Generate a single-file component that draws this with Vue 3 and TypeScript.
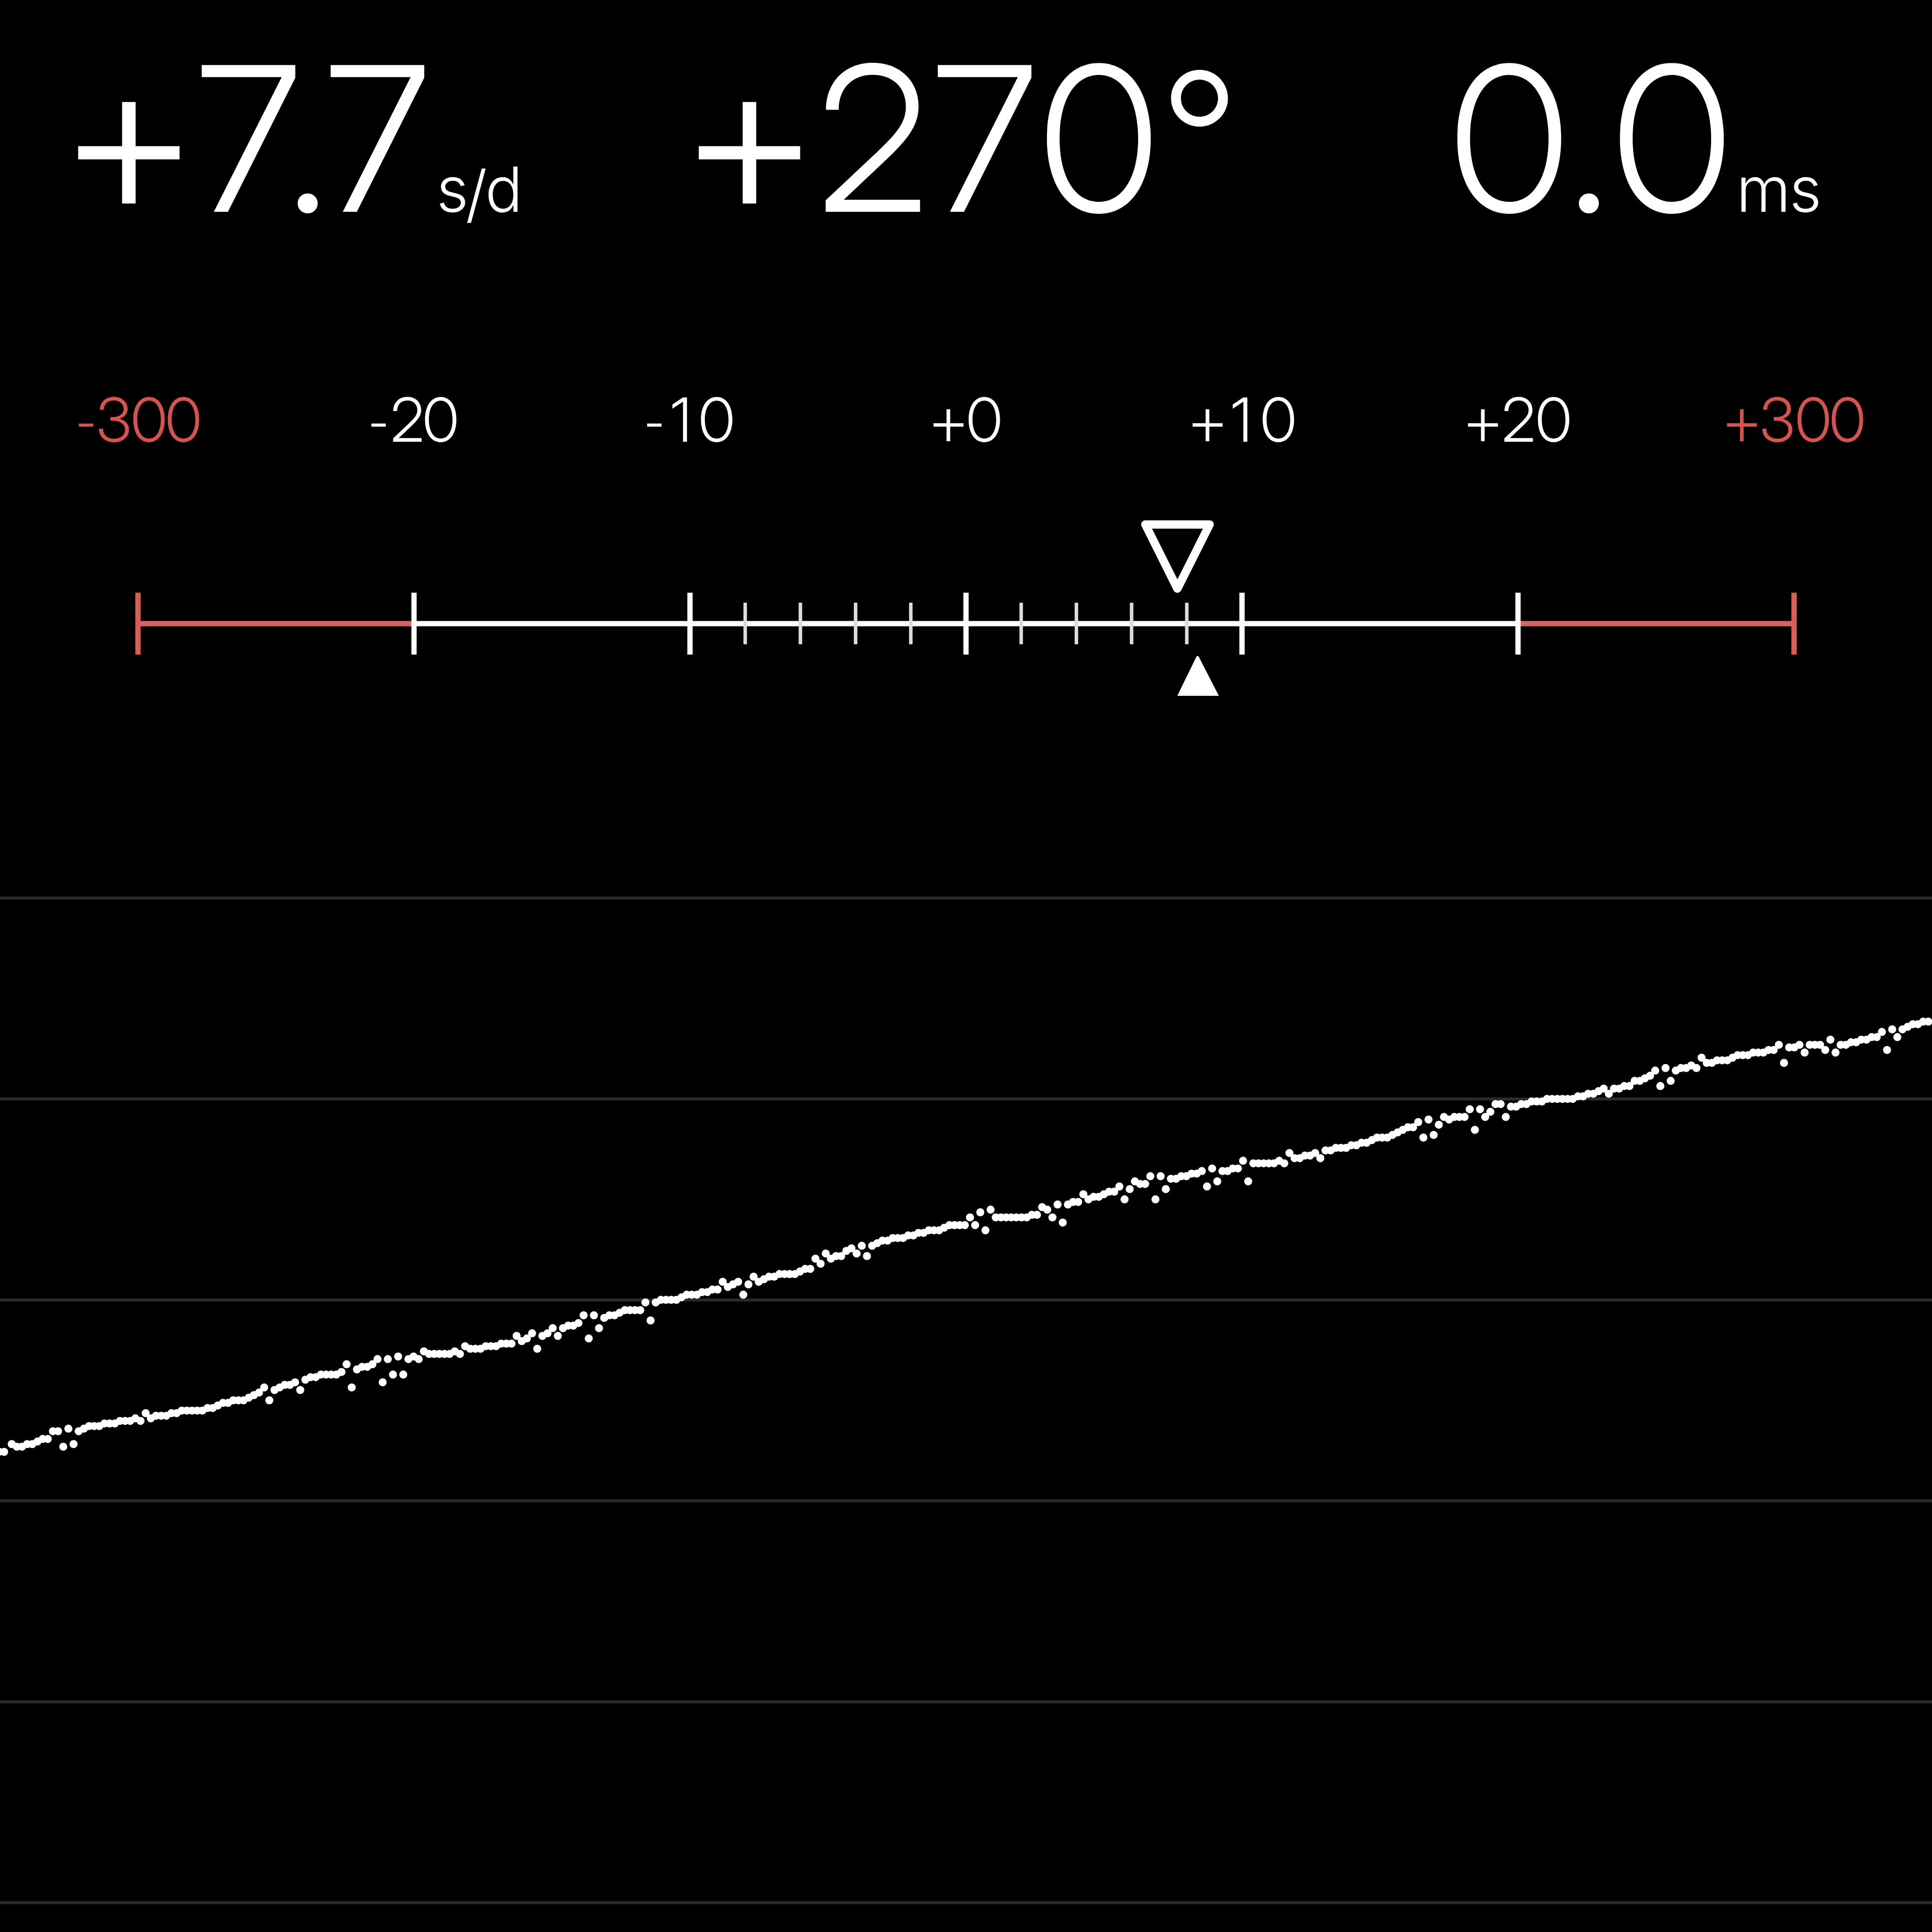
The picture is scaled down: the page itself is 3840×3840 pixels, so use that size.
<script setup lang="ts">
interface Glyph {
  ch: string
  gap: number
  cls?: string
}

interface Reading {
  indent: number
  glyphs: Glyph[]
}

interface ScaleLabel extends Reading {
  limit: boolean
}

const readings: Reading[] = [
  {
    indent: 119.5,
    glyphs: [
      { ch: '+', gap: 0, cls: 'plus' },
      { ch: '7', gap: -2.2 },
      { ch: '.', gap: -28.2 },
      { ch: '7', gap: -7.1 },
      { ch: 's', gap: 13.6, cls: 'unit' },
      { ch: '/', gap: -6, cls: 'unit slash' },
      { ch: 'd', gap: -4, cls: 'unit' },
    ],
  },
  {
    indent: 73,
    glyphs: [
      { ch: '+', gap: 0, cls: 'plus' },
      { ch: '2', gap: -2.2 },
      { ch: '7', gap: 7.9 },
      { ch: '0', gap: 4.6 },
      { ch: '°', gap: 7.2, cls: 'degree' },
    ],
  },
  {
    indent: 320.7,
    glyphs: [
      { ch: '0', gap: 0 },
      { ch: '.', gap: -3.4 },
      { ch: '0', gap: 3.5 },
      { ch: 'm', gap: 8.7, cls: 'unit' },
      { ch: 's', gap: -2.7, cls: 'unit' },
    ],
  },
]

const label = (indent: number, text: string, gaps: number[], limit = false): ScaleLabel => ({
  indent,
  limit,
  glyphs: [...text].map((ch, i) => ({
    ch,
    gap: gaps[i],
    cls: ch === '+' ? 'sign sign-plus' : ch === '-' ? 'sign sign-minus' : '',
  })),
})

const labels: ScaleLabel[] = [
  label(153.7, '-300', [0, 2.9, -1, -3.5], true),
  label(186.7, '-20', [0, 6, -3.2]),
  label(186.2, '-10', [0, 14.7, 14]),
  label(205.3, '+0', [0, 0.6]),
  label(171.7, '+10', [0, 11.8, 16.8]),
  label(170.3, '+20', [0, 2.8, 0.2]),
  label(136.5, '+300', [0, 0.7, 0.8, -3.9], true),
]

// Scale geometry: seven equal columns, a major tick in the middle of each.
const column = 3840 / 7
const majors = [0, 1, 2, 3, 4, 5, 6].map((i) => ({
  x: column * (i + 0.5),
  limit: i === 0 || i === 6,
}))
const minors = [-4, -3, -2, -1, 1, 2, 3, 4].map((i) => 1920 + (i * column) / 5)

// Timegrapher trace: one beat per entry, in display rows.
const unit = 5.12
const beats: number[] = [
  560, 561, 561, 560, 560, 559, 558, 558, 555, 555, 561, 554, 560, 555, 554, 553, 553, 553, 552, 552,
  552, 551, 551, 551, 550, 551, 548, 550, 549, 549, 549, 548, 548, 547, 547, 547, 547, 547, 546, 546,
  545, 544, 544, 543, 543, 543, 542, 541, 540, 538, 543, 539, 538, 537, 537, 536, 539, 535, 534, 534,
  533, 533, 533, 533, 532, 529, 538, 531, 530, 530, 529, 527, 536, 527, 533, 526, 533, 527, 526, 527,
  524, 525, 525, 525, 525, 525, 524, 525, 522, 523, 523, 523, 522, 522, 522, 521, 521, 521, 518, 520,
  519, 517, 523, 518, 517, 515, 518, 515, 514, 514, 513, 510, 519, 510, 515, 511, 510, 510, 509, 508,
  508, 508, 508, 505, 512, 505, 504, 504, 504, 504, 503, 502, 502, 502, 501, 501, 500, 500, 497, 499,
  498, 497, 502, 498, 495, 497, 496, 495, 495, 494, 494, 494, 494, 493, 492, 492, 488, 490, 486, 488,
  487, 487, 485, 484, 486, 483, 487, 483, 482, 481, 481, 480, 480, 480, 479, 479, 478, 478, 477, 477,
  477, 476, 475, 475, 475, 475, 472, 475, 470, 477, 469, 472, 472, 472, 472, 472, 472, 472, 471, 471,
  468, 469, 472, 467, 474, 467, 466, 466, 463, 465, 464, 464, 463, 462, 462, 460, 465, 461, 458, 459,
  459, 456, 465, 456, 461, 457, 457, 456, 456, 455, 455, 454, 460, 453, 458, 454, 454, 453, 453, 450,
  458, 451, 451, 451, 451, 451, 450, 451, 447, 449, 449, 448, 448, 447, 449, 446, 446, 445, 445, 445,
  444, 444, 443, 443, 442, 441, 441, 441, 440, 439, 438, 437, 437, 435, 441, 434, 440, 436, 433, 434,
  433, 433, 433, 430, 438, 430, 433, 431, 428, 428, 433, 429, 429, 428, 428, 427, 427, 427, 426, 426,
  426, 426, 426, 426, 425, 425, 424, 424, 423, 422, 424, 422, 422, 421, 421, 419, 419, 418, 417, 415,
  421, 414, 419, 415, 414, 414, 413, 414, 410, 412, 412, 411, 411, 411, 410, 409, 409, 409, 408, 408,
  408, 407, 407, 405, 412, 406, 406, 405, 408, 405, 405, 405, 407, 403, 408, 405, 405, 404, 404, 403,
  403, 402, 402, 400, 407, 399, 402, 399, 398, 397, 397, 396, 396,
]
const dots = [
  { x: -2, y: 563.6 * unit },
  { x: 8.2, y: 563.6 * unit },
  ...beats.map((row, i) => ({ x: 23.3 + i * unit * 2, y: (row + 0.6) * unit })),
]

const gridLines = [0, 1, 2, 3, 4, 5].map((i) => 1785 + i * unit * 78)
</script>

<template>
  <main class="timegrapher">
    <header class="readings">
      <div v-for="(r, i) in readings" :key="i" class="reading" :style="{ paddingLeft: r.indent + 'px' }">
        <span
          v-for="(g, j) in r.glyphs"
          :key="j"
          class="glyph"
          :class="g.cls"
          :style="{ marginLeft: g.gap + 'px' }"
        >{{ g.ch }}</span>
      </div>
    </header>

    <div class="labels">
      <div
        v-for="(l, i) in labels"
        :key="i"
        class="label"
        :class="{ limit: l.limit }"
        :style="{ paddingLeft: l.indent + 'px' }"
      >
        <span
          v-for="(g, j) in l.glyphs"
          :key="j"
          class="glyph"
          :class="g.cls"
          :style="{ marginLeft: g.gap + 'px' }"
        >{{ g.ch }}</span>
      </div>
    </div>

    <svg class="scale" width="3840" height="700" viewBox="0 1000 3840 700">
      <line class="bar limit" x1="274.3" x2="822.9" y1="1239.6" y2="1239.6" />
      <line class="bar limit" x1="3017.1" x2="3565.7" y1="1239.6" y2="1239.6" />
      <line class="bar" x1="822.9" x2="3017.1" y1="1239.6" y2="1239.6" />
      <line v-for="x in minors" :key="x" class="minor" :x1="x" :x2="x" y1="1198" y2="1280.5" />
      <line
        v-for="m in majors"
        :key="m.x"
        class="major"
        :class="{ limit: m.limit }"
        :x1="m.x"
        :x2="m.x"
        y1="1178"
        y2="1301"
      />
      <path class="pointer-average" d="M2276.4 1042.4H2404.3L2340.2 1170Z" />
      <path class="pointer-live" d="M2378.6 1304H2382L2422.5 1383H2340Z" />
    </svg>

    <svg class="trace" width="3840" height="2140" viewBox="0 1700 3840 2140">
      <line v-for="y in gridLines" :key="y" class="grid" x1="0" x2="3840" :y1="y" :y2="y" />
      <circle v-for="(d, i) in dots" :key="i" class="dot" :cx="d.x" :cy="d.y" r="8" />
    </svg>
  </main>
</template>

<style>
body {
  background: #000;
}
</style>

<style scoped>
.timegrapher {
  display: flex;
  flex-direction: column;
  width: 3840px;
  height: 3840px;
  overflow: hidden;
  background: #000;
  color: #fff;
  font-family: 'Inter Display', Inter, sans-serif;
  font-weight: 300;
  font-kerning: none;
  font-feature-settings: 'calt' 0;
}

.readings {
  display: grid;
  grid-template-columns: repeat(3, 1280px);
  height: 742px;
  padding-top: 26px;
  box-sizing: border-box;
}

.reading {
  display: flex;
  align-items: baseline;
  height: 500px;
  font-size: 401px;
  line-height: 500px;
  white-space: nowrap;
}

.glyph {
  position: relative;
}

.reading .plus {
  top: 9px;
  font-size: 448px;
  line-height: 450px;
}

.reading .degree {
  top: -20px;
  font-size: 357px;
}

.reading .unit {
  font-family: Inter, sans-serif;
  font-size: 124px;
  line-height: 160px;
}

.reading .slash {
  top: 8px;
}

.labels {
  display: grid;
  grid-template-columns: repeat(7, 1fr);
  height: 258px;
}

.label {
  display: flex;
  align-items: baseline;
  height: 185px;
  font-size: 121px;
  line-height: 185px;
  white-space: nowrap;
}

.label.limit {
  color: #d9534d;
}

.sign {
  font-family: Roboto, sans-serif;
  font-size: 122px;
  line-height: 150px;
}

.sign-plus {
  top: 8px;
}

.sign-minus {
  top: 5px;
}

svg {
  display: block;
  flex: none;
}

.bar {
  stroke: #fff;
  stroke-width: 10.5;
}

.bar.limit {
  stroke: #d9655e;
}

.major {
  stroke: #fff;
  stroke-width: 10.5;
}

.major.limit {
  stroke: #df5c52;
}

.minor {
  stroke: #dcdcdc;
  stroke-width: 7;
}

.pointer-average {
  fill: none;
  stroke: #fff;
  stroke-width: 16.5;
  stroke-linejoin: round;
}

.pointer-live {
  fill: #fff;
}

.grid {
  stroke: #2b2b2b;
  stroke-width: 6;
}

.dot {
  fill: #fff;
}
</style>
